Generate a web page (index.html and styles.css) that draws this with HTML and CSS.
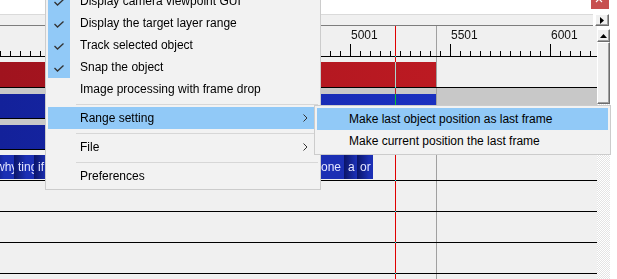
FILE: index.html
```html
<!DOCTYPE html>
<html lang="en">
<head>
<meta charset="UTF-8">
<title>Timeline menu</title>
<link rel="stylesheet" href="styles.css">
</head>
<body>
<div class="screen">
    <div class="topbar">
        <div class="close">
            <svg width="18" height="9" viewBox="0 0 18 9"><path d="M5 -4 L11 2 M11 -4 L5 2" stroke="#fff" stroke-width="1.2" fill="none"/></svg>
        </div>
    </div>
    <div class="hscroll">
        <div class="hthumb"></div>
        <div class="sbtn sbtn-right">
            <svg width="4" height="7" viewBox="0 0 4 7"><path d="M0 0 L4 3.5 L0 7 Z" fill="#000"/></svg>
        </div>
    </div>
    <div class="workarea">
        <div class="timeline">
            <div class="ruler">
                <div class="labels">
                    <span>3501</span><span>4001</span><span>4501</span><span>5001</span><span>5501</span><span>6001</span>
                </div>
                <div class="ticks"></div>
            </div>
            <div class="layer">
                <div class="bar bar-red"></div>
            </div>
            <div class="layer layer-sel">
                <div class="bar bar-blue"></div>
            </div>
            <div class="layer layer-sel">
                <div class="bar bar-blue"></div>
            </div>
            <div class="layer">
                <div class="clips">
                    <div class="clip clip-first">why</div>
                    <div class="clip clip-w20">ting</div>
                    <div class="clip clip-w60">if</div>
                    <div class="clip clip-rest">the</div>
                    <div class="clip clip-w24">one s</div>
                    <div class="clip clip-w13">a</div>
                    <div class="clip clip-w16">or</div>
                </div>
            </div>
            <div class="layer"></div>
            <div class="layer"></div>
            <div class="layer"></div>
            <div class="layer"></div>
            <div class="cursor"></div>
        </div>
        <div class="vscroll">
            <div class="sbtn sbtn-up">
                <svg width="7" height="4" viewBox="0 0 7 4"><path d="M0 4 L3.5 0 L7 4 Z" fill="#000"/></svg>
            </div>
            <div class="vthumb"></div>
            <div class="vtrack"></div>
        </div>
        <div class="edge"></div>
    </div>

    <!-- context menu -->
    <div class="menu main-menu">
        <div class="item checked"><span class="check"><svg width="10" height="7" viewBox="0 0 10 7"><path d="M0.5 3 L3.5 6 L9.5 0.5" stroke="#333" stroke-width="1.3" fill="none"/></svg></span><span class="label">Display camera viewpoint GUI</span></div>
        <div class="item checked"><span class="check"><svg width="10" height="7" viewBox="0 0 10 7"><path d="M0.5 3 L3.5 6 L9.5 0.5" stroke="#333" stroke-width="1.3" fill="none"/></svg></span><span class="label">Display the target layer range</span></div>
        <div class="item checked"><span class="check"><svg width="10" height="7" viewBox="0 0 10 7"><path d="M0.5 3 L3.5 6 L9.5 0.5" stroke="#333" stroke-width="1.3" fill="none"/></svg></span><span class="label">Track selected object</span></div>
        <div class="item checked"><span class="check"><svg width="10" height="7" viewBox="0 0 10 7"><path d="M0.5 3 L3.5 6 L9.5 0.5" stroke="#333" stroke-width="1.3" fill="none"/></svg></span><span class="label">Snap the object</span></div>
        <div class="item"><span class="check"></span><span class="label">Image processing with frame drop</span></div>
        <div class="sep"></div>
        <div class="item hl"><span class="check"></span><span class="label">Range setting</span><span class="arrow"><svg width="5" height="8" viewBox="0 0 5 8"><path d="M0.5 0.5 L4 4 L0.5 7.5" stroke="#333" stroke-width="1" fill="none"/></svg></span></div>
        <div class="sep"></div>
        <div class="item"><span class="check"></span><span class="label">File</span><span class="arrow"><svg width="5" height="8" viewBox="0 0 5 8"><path d="M0.5 0.5 L4 4 L0.5 7.5" stroke="#333" stroke-width="1" fill="none"/></svg></span></div>
        <div class="sep"></div>
        <div class="item"><span class="check"></span><span class="label">Preferences</span></div>
    </div>

    <div class="menu sub-menu">
        <div class="item hl"><span class="label">Make last object position as last frame</span></div>
        <div class="item"><span class="label">Make current position the last frame</span></div>
    </div>
</div>
</body>
</html>
```

FILE: styles.css
```css
body {
    margin: 0;
    background-color: #fff;
    font-family: "Liberation Sans", Arial, sans-serif;
    font-size: 12px;
    overflow: hidden;
}

.screen {
    position: relative;
    width: 617px;
    height: 279px;
    overflow: hidden;
}

/* window top */
.topbar {
    height: 14px;
    background-color: #fff;
}

.close {
    width: 18px;
    height: 9px;
    margin-left: 591px;
    background-color: #c75050;
}

.close svg {
    display: block;
}

/* scrollbars */
.hscroll {
    display: flex;
    height: 12px;
}

.hthumb {
    width: 593px;
    box-sizing: border-box;
    background-color: #f0f0f0;
    border-top: 1px solid #dadada;
    border-bottom: 1px solid #7d7d7d;
}

.sbtn {
    display: flex;
    justify-content: center;
    align-items: center;
    box-sizing: border-box;
    background-color: #f0f0f0;
    border-top: 1px solid #fff;
    border-left: 1px solid #fff;
    border-right: 1px solid #6d6d6d;
    border-bottom: 1px solid #6d6d6d;
    box-shadow: inset -1px -1px 0 #a0a0a0;
}

.sbtn-right {
    width: 14px;
    margin-left: 2px;
}

.workarea {
    display: flex;
    height: 253px;
}

.vscroll {
    display: flex;
    flex-direction: column;
    width: 13px;
    padding-top: 3px;
}

.sbtn-up {
    height: 13px;
}

.vthumb {
    height: 62px;
    box-sizing: border-box;
    background-color: #f0f0f0;
    border-top: 1px solid #fff;
    border-left: 1px solid #fff;
    border-right: 1px solid #6d6d6d;
    border-bottom: 1px solid #6d6d6d;
    box-shadow: inset -1px -1px 0 #a0a0a0;
}

.vtrack {
    flex: 1;
    background: repeating-conic-gradient(#fff 0 25%, #e4e4e4 0 50%) 0 0 / 2px 2px;
}

.edge {
    flex: 1;
    background-color: #fff;
}

/* timeline */
.timeline {
    position: relative;
    width: 597px;
    background-color: #f0f0f0;
}

.ruler {
    display: flex;
    flex-direction: column;
    justify-content: space-between;
    padding-top: 2px;
    height: 28px;
    border-bottom: 1px solid #000;
    background: linear-gradient(#a0a0a0, #a0a0a0) no-repeat 436px 0 / 1px 100%;
}

.labels {
    display: flex;
    padding-left: 51px;
    line-height: 14px;
    color: #111;
}

.labels span {
    flex: none;
    width: 100px;
}

.ticks {
    height: 12px;
    background-image: linear-gradient(to right, #000 1px, transparent 1px),
                      linear-gradient(to right, #000 1px, transparent 1px);
    background-size: 100px 12px, 10px 5px;
    background-position: 50px bottom, 0 bottom;
    background-repeat: repeat-x;
}

.layer {
    display: flow-root;
    height: 30px;
    border-bottom: 1px solid #000;
    background: linear-gradient(#a0a0a0, #a0a0a0) no-repeat 436px 0 / 1px 100%;
}

.layer-sel {
    background-color: #c8c8c8;
}

.bar {
    width: 436px;
    height: 24px;
    margin-top: 6px;
}

.bar-red {
    height: 25px;
    margin-top: 5px;
    background: linear-gradient(to right, #a0131e, #bc1a22);
}

.bar-blue {
    background: linear-gradient(to right, #13219a, #1a30c0);
}

.clips {
    display: flex;
    height: 24px;
    margin-top: 5px;
}

.clip {
    flex: none;
    height: 24px;
    overflow: hidden;
    white-space: nowrap;
    line-height: 24px;
    padding-left: 4px;
    box-sizing: border-box;
    color: #e4e6ff;
    background: linear-gradient(to right, #0b1568, #1b2fb4 12px);
}

.clip-first {
    width: 22px;
    margin-left: -8px;
}

.clip-w20 { width: 20px; }
.clip-w60 { width: 60px; }
.clip-rest { width: 226px; }
.clip-w24 { width: 24px; padding-left: 1px; background: #1b2fb4; }
.clip-w13 { width: 13px; }
.clip-w16 { width: 16px; padding-left: 3px; }

.cursor {
    position: absolute;
    left: 395px;
    top: 0;
    bottom: 0;
    width: 1px;
    background-color: #10f0f0;
    mix-blend-mode: difference;
}

/* popup menus */
.menu {
    position: absolute;
    background-color: #f2f2f2;
    border: 1px solid #cccccc;
    padding: 2px;
    color: #000;
}

.main-menu {
    left: 45px;
    top: -13px;
    width: 270px;
}

.sub-menu {
    left: 314px;
    top: 105px;
    width: 291px;
}

.item {
    display: flex;
    align-items: center;
    height: 22px;
}

.item.hl {
    background-color: #91c9f7;
}

.check {
    flex: none;
    display: flex;
    justify-content: center;
    align-items: center;
    width: 22px;
    height: 22px;
}

.checked .check {
    background-color: #91c9f7;
}

.check svg {
    margin-top: 2px;
}

.label {
    flex: 1;
    margin-left: 10px;
    white-space: nowrap;
}

.sub-menu .label {
    margin-left: 32px;
}

.arrow {
    flex: none;
    display: flex;
    margin-right: 10px;
}

.sep {
    height: 0;
    margin: 4px 0 2px 28px;
    border-top: 1px solid #d7d7d7;
}
```
